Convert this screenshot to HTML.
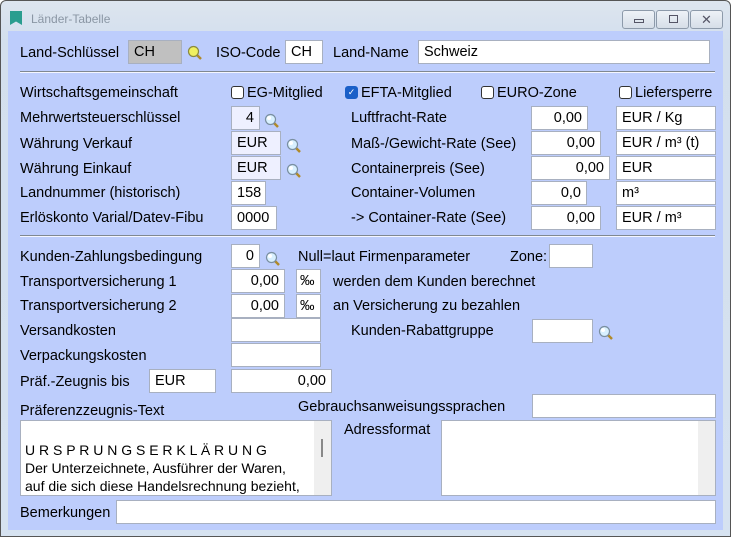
<!DOCTYPE html>
<html><head><meta charset="utf-8"><style>
*{box-sizing:border-box;margin:0;padding:0}
body{width:731px;height:537px;overflow:hidden;background:#fff;font-family:"Liberation Sans",Arial,sans-serif;font-size:14.5px;color:#000;position:relative}
.win{position:absolute;left:0;top:0;width:731px;height:537px;border:1px solid #555;border-radius:6px 6px 0 0;background:linear-gradient(#dde5ef,#d3dfed 40px,#d6e2f0)}
.title{position:absolute;left:30px;top:11px;font-size:12px;color:#8a96a4}
.ico{position:absolute;left:9px;top:10px;width:12px;height:14px;background:#2a9d8f;clip-path:polygon(0 0,100% 0,100% 100%,50% 75%,0 100%)}
.btn{position:absolute;top:9px;width:33px;height:19px;border:1px solid #8d9aaa;border-radius:3px;background:linear-gradient(#eef2f7,#d6dee8)}
.content{position:absolute;left:8px;top:31px;width:715px;height:499px;background:#bdcdfc}
.l{position:absolute;white-space:nowrap;line-height:16px;margin-top:1px}
.b{position:absolute;background:#fff;border:1px solid #a8b0c0;height:24px;line-height:23px;padding:0 5px;white-space:nowrap}
.r{text-align:right}
.lav{background:#eef0ff}
.hr{position:absolute;left:20px;width:695px;height:2px;border-top:1px solid #808890;border-bottom:1px solid #f4f6ff}
.cb{position:absolute;width:13px;height:13px;border:1px solid #333;border-radius:3px;background:#fff}
.mag{position:absolute;width:16px;height:16px}
</style></head><body>
<div class="win">
<div class="ico"></div><div class="title">Länder-Tabelle</div>
<div class="btn" style="left:621px"><div style="position:absolute;left:11px;top:8px;width:10px;height:4px;border:1px solid #556"></div></div>
<div class="btn" style="left:655px"><div style="position:absolute;left:12px;top:4px;width:9px;height:8px;border:1px solid #556"></div></div>
<div class="btn" style="left:689px;text-align:center;font-size:13px;line-height:17px;color:#556">✕</div>
</div>
<div class="content"></div>
<svg width="0" height="0" style="position:absolute"><defs><g id="m"><line x1="9" y1="9" x2="14" y2="14" stroke="#b08a2a" stroke-width="2.5"/><circle cx="6.5" cy="6.5" r="5" fill="#d8f0ff" stroke="#7a8fa0" stroke-width="1.2"/><circle cx="5" cy="5" r="2" fill="#fff"/></g></defs></svg>

<div class="l" style="left:20px;top:44px">Land-Schlüssel</div>
<div class="b" style="left:128px;top:40px;width:54px;background:#c0c0c0">CH</div>
<svg class="mag" style="left:187px;top:45px"><line x1="9" y1="9" x2="14" y2="14" stroke="#b08a2a" stroke-width="2.5"/><circle cx="6.5" cy="6.5" r="5" fill="#f0f060" stroke="#8a8a40" stroke-width="1.2"/></svg>
<div class="l" style="left:216px;top:44px">ISO-Code</div>
<div class="b" style="left:285px;top:40px;width:38px">CH</div>
<div class="l" style="left:333px;top:44px">Land-Name</div>
<div class="b" style="left:418px;top:40px;width:292px">Schweiz</div>
<div class="hr" style="top:71px"></div>

<div class="l" style="left:20px;top:84px">Wirtschaftsgemeinschaft</div>
<div class="cb" style="left:231px;top:86px"></div><div class="l" style="left:247px;top:84px">EG-Mitglied</div>
<div class="cb" style="left:345px;top:86px;background:#1a5fc8;border-color:#1a5fc8;color:#fff;font-size:9px;line-height:11px;text-align:center">✓</div><div class="l" style="left:361px;top:84px">EFTA-Mitglied</div>
<div class="cb" style="left:481px;top:86px"></div><div class="l" style="left:497px;top:84px">EURO-Zone</div>
<div class="cb" style="left:619px;top:86px"></div><div class="l" style="left:635px;top:84px">Liefersperre</div>

<div class="l" style="left:20px;top:109px">Mehrwertsteuerschlüssel</div>
<div class="b r lav" style="left:231px;top:106px;width:29px">4</div>
<svg class="mag" style="left:264px;top:113px"><use href="#m"/></svg>
<div class="l" style="left:20px;top:135px">Währung Verkauf</div>
<div class="b lav" style="left:231px;top:131px;width:50px">EUR</div>
<svg class="mag" style="left:286px;top:138px"><use href="#m"/></svg>
<div class="l" style="left:20px;top:160px">Währung Einkauf</div>
<div class="b lav" style="left:231px;top:156px;width:50px">EUR</div>
<svg class="mag" style="left:286px;top:163px"><use href="#m"/></svg>
<div class="l" style="left:20px;top:184px">Landnummer (historisch)</div>
<div class="b" style="left:231px;top:181px;width:35px">158</div>
<div class="l" style="left:20px;top:209px">Erlöskonto Varial/Datev-Fibu</div>
<div class="b" style="left:231px;top:206px;width:46px">0000</div>

<div class="l" style="left:351px;top:109px">Luftfracht-Rate</div>
<div class="b r" style="left:531px;top:106px;width:57px">0,00</div>
<div class="l" style="left:351px;top:135px">Maß-/Gewicht-Rate (See)</div>
<div class="b r" style="left:531px;top:131px;width:70px">0,00</div>
<div class="l" style="left:351px;top:160px">Containerpreis (See)</div>
<div class="b r" style="left:531px;top:156px;width:79px">0,00</div>
<div class="l" style="left:351px;top:184px">Container-Volumen</div>
<div class="b r" style="left:531px;top:181px;width:56px">0,0</div>
<div class="l" style="left:351px;top:209px">-&gt; Container-Rate (See)</div>
<div class="b r" style="left:531px;top:206px;width:70px">0,00</div>
<div class="b" style="left:616px;top:106px;width:100px">EUR / Kg</div>
<div class="b" style="left:616px;top:131px;width:100px">EUR / m³ (t)</div>
<div class="b" style="left:616px;top:156px;width:100px">EUR</div>
<div class="b" style="left:616px;top:181px;width:100px">m³</div>
<div class="b" style="left:616px;top:206px;width:100px">EUR / m³</div>
<div class="hr" style="top:235px"></div>

<div class="l" style="left:20px;top:248px">Kunden-Zahlungsbedingung</div>
<div class="b r" style="left:231px;top:244px;width:29px">0</div>
<svg class="mag" style="left:265px;top:251px"><use href="#m"/></svg>
<div class="l" style="left:298px;top:248px">Null=laut Firmenparameter</div>
<div class="l" style="left:510px;top:248px">Zone:</div>
<div class="b" style="left:549px;top:244px;width:44px"></div>
<div class="l" style="left:20px;top:273px">Transportversicherung 1</div>
<div class="b r" style="left:231px;top:269px;width:54px">0,00</div>
<div class="b" style="left:296px;top:269px;width:25px;padding:0 3px">‰</div>
<div class="l" style="left:333px;top:273px">werden dem Kunden berechnet</div>
<div class="l" style="left:20px;top:297px">Transportversicherung 2</div>
<div class="b r" style="left:231px;top:294px;width:54px">0,00</div>
<div class="b" style="left:296px;top:294px;width:25px;padding:0 3px">‰</div>
<div class="l" style="left:333px;top:297px">an Versicherung zu bezahlen</div>
<div class="l" style="left:20px;top:322px">Versandkosten</div>
<div class="b" style="left:231px;top:318px;width:90px"></div>
<div class="l" style="left:351px;top:322px">Kunden-Rabattgruppe</div>
<div class="b" style="left:532px;top:319px;width:61px"></div>
<svg class="mag" style="left:598px;top:325px"><use href="#m"/></svg>
<div class="l" style="left:20px;top:347px">Verpackungskosten</div>
<div class="b" style="left:231px;top:343px;width:90px"></div>
<div class="l" style="left:20px;top:373px">Präf.-Zeugnis bis</div>
<div class="b" style="left:149px;top:369px;width:67px">EUR</div>
<div class="b r" style="left:231px;top:369px;width:101px">0,00</div>

<div class="l" style="left:20px;top:402px">Präferenzzeugnis-Text</div>
<div class="l" style="left:298px;top:398px">Gebrauchsanweisungssprachen</div>
<div class="b" style="left:532px;top:394px;width:184px"></div>
<div class="b" style="left:20px;top:420px;width:312px;height:76px;padding:0;line-height:18px">
<div style="position:absolute;left:4px;top:20px;white-space:nowrap;font-size:14px">U R S P R U N G S E R K L Ä R U N G<br>Der Unterzeichnete, Ausführer der Waren,<br>auf die sich diese Handelsrechnung bezieht,</div>
<div style="position:absolute;right:0;top:0;width:17px;height:74px;background:#efefef"><div style="position:absolute;left:7px;top:18px;width:2px;height:18px;background:#888"></div></div></div>
<div class="l" style="left:344px;top:421px">Adressformat</div>
<div class="b" style="left:441px;top:420px;width:275px;height:76px;padding:0"><div style="position:absolute;right:0;top:0;width:17px;height:74px;background:#efefef"></div></div>
<div class="l" style="left:20px;top:504px">Bemerkungen</div>
<div class="b" style="left:116px;top:500px;width:600px"></div>
</body></html>
